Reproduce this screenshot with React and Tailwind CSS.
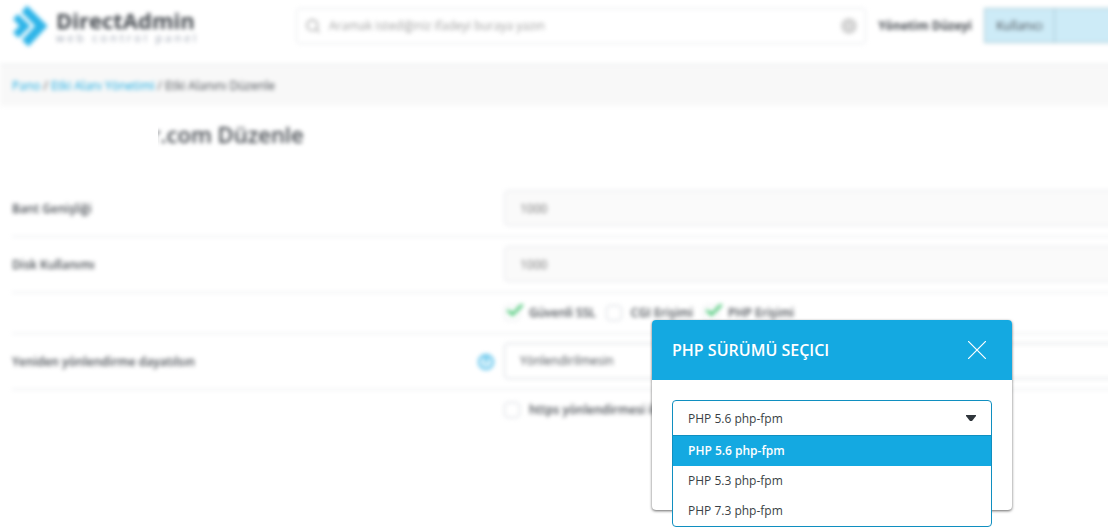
import { useState } from "react";
import { Search } from "lucide-react";

const phpVersions = ["PHP 5.6 php-fpm", "PHP 5.3 php-fpm", "PHP 7.3 php-fpm"];

const limits = [
    { id: "bandwidth", label: "Bant Genişliği", value: "1000" },
    { id: "disk", label: "Disk Kullanımı", value: "1000" },
];

function Logo() {
    return (
        <a href="#" className="flex w-[284px] shrink-0 items-center gap-2">
            <svg viewBox="0 0 36 42" className="h-[42px] w-9" aria-hidden="true">
                <path d="M15 .5 35.500 21 16.500 41.500 10 35 23 21 9.500 7z" fill="#2db4e8" />
                <path d="M6 9 18.500 21 6.500 33 1 27.500 7.500 21 1 14z" fill="#2db4e8" />
            </svg>
            <div>
                <div className="text-[22px] leading-6 font-bold text-[#454a50]">DirectAdmin</div>
                <div className="text-[11px] leading-3 tracking-[3px] text-gray-400">web control panel</div>
            </div>
        </a>
    );
}

function Header() {
    return (
        <header className="flex h-16 items-start">
            <div className="flex h-[52px] items-center pl-3">
                <Logo />
            </div>
            <div className="mt-2 flex h-9 flex-1 items-center gap-2 rounded border border-gray-200 px-2">
                <Search className="size-4 text-neutral-400" />
                <input
                    type="text"
                    aria-label="Arama"
                    placeholder="Aramak istediğiniz ifadeyi buraya yazın"
                    className="flex-1 text-xs outline-none placeholder:text-neutral-400"
                />
                <button type="button" aria-label="Temizle" className="flex size-4 items-center justify-center rounded-full bg-neutral-300">
                    <span className="block size-1 rounded-full bg-neutral-200" />
                </button>
            </div>
            <div className="ml-3 flex h-[52px] items-center text-xs font-bold text-[#454a50]">Yönetim Düzeyi</div>
            <div className="mt-2 ml-3 flex h-[35px] w-40 border border-[#a3c6d2] bg-[#cdebf7] text-xs text-[#454a50]">
                <button type="button" className="w-[70px] border-r border-[#a3c6d2]">Kullanıcı</button>
            </div>
        </header>
    );
}

function Breadcrumb() {
    return (
        <nav className="flex h-[42px] items-center gap-[3px] border-t border-gray-200 bg-[#f8f8f8] px-3 text-xs text-[#454a50]">
            <a href="#" className="text-[#14a9e1]">Pano</a>
            <span>/</span>
            <a href="#" className="text-[#14a9e1]">Etki Alanı Yönetimi</a>
            <span>/</span>
            <span>Etki Alanını Düzenle</span>
        </nav>
    );
}

function CheckOption({ label, defaultChecked }) {
    return (
        <label className="flex items-center gap-[9px] text-xs font-semibold">
            <span className="relative flex">
                <input
                    type="checkbox"
                    defaultChecked={defaultChecked}
                    className="peer size-4 appearance-none rounded-sm border border-gray-300 checked:border-gray-200"
                />
                <svg viewBox="0 0 18 14" className="absolute -top-0.5 left-0.5 hidden h-[14px] w-[18px] peer-checked:block">
                    <path d="M1.500 7 6.500 11.500 16.500 1.500" fill="none" stroke="#4cc878" strokeWidth="3" />
                </svg>
            </span>
            {label}
        </label>
    );
}

function Row({ id, label, help, border = true, children }) {
    return (
        <div className={border ? "flex items-center border-b border-gray-200" : "flex items-center"}>
            <div className="flex w-[492px] shrink-0 items-center justify-between pr-[10px]">
                <label htmlFor={id} className="text-xs font-semibold">{label}</label>
                {help && (
                    <button type="button" aria-label="Yardım" className="flex size-4 items-center justify-center rounded-full border-2 border-[#4dbdea] bg-[#e3f5fc] text-[10px] font-bold text-[#14a9e1]">
                        ?
                    </button>
                )}
            </div>
            <div className="flex flex-1 items-center">{children}</div>
        </div>
    );
}

function DomainForm() {
    return (
        <main className="pl-3 text-[#454a50]">
            <h1 className="flex h-[75px] items-start pt-3 pl-[139px] text-[22px] leading-8 font-semibold">r.com Düzenle</h1>
            <form>
                {limits.map((item) => (
                    <Row key={item.id} id={item.id} label={item.label}>
                        <input
                            id={item.id}
                            type="text"
                            readOnly
                            defaultValue={item.value}
                            className="mt-[9px] mb-[10px] h-9 w-full rounded border border-gray-200 bg-[#fafafa] px-[15px] text-xs text-neutral-500"
                        />
                    </Row>
                ))}
                <Row>
                    <div className="flex h-10 items-center gap-[10px]">
                        <CheckOption label="Güvenli SSL" defaultChecked />
                        <CheckOption label="CGI Erişimi" />
                        <CheckOption label="PHP Erişimi" defaultChecked />
                    </div>
                </Row>
                <Row id="redirect" label="Yeniden yönlendirme dayatılsın" help>
                    <select id="redirect" className="mt-[9px] mb-[10px] h-9 w-full appearance-none rounded border border-gray-300 px-[15px] text-xs">
                        <option>Yönlendirilmesin</option>
                    </select>
                </Row>
                <Row border={false}>
                    <div className="flex h-10 items-center">
                        <CheckOption label="https yönlendirmesi ile SSL zorla" />
                    </div>
                </Row>
            </form>
        </main>
    );
}

function PhpSelector() {
    const [version, setVersion] = useState(phpVersions[0]);

    return (
        <section role="dialog" aria-labelledby="php-title" className="absolute top-80 right-24 h-[190px] w-[360px] rounded-sm bg-white shadow-[0_1px_3px_rgba(0,0,0,0.6)]">
            <div className="flex h-[60px] items-center justify-between rounded-t-sm bg-[#14a9e1] pr-[26px] pl-5 text-white">
                <h2 id="php-title" className="text-base font-semibold">PHP SÜRÜMÜ SEÇICI</h2>
                <button type="button" aria-label="Kapat">
                    <svg viewBox="0 0 18 18" className="size-[18px]" fill="none" stroke="currentColor" strokeWidth="1.2">
                        <path d="M0 0 18 18M18 0 0 18" />
                    </svg>
                </button>
            </div>
            <div className="p-5">
                <div className="rounded border border-[#108fc0] bg-white text-xs text-[#3a3f45]">
                    <div className="relative">
                        <select
                            aria-label="PHP sürümü"
                            value={version}
                            onChange={(e) => setVersion(e.target.value)}
                            className="block h-[34px] w-full appearance-none px-[15px] pt-0.5 outline-none"
                        >
                            {phpVersions.map((item) => (
                                <option key={item}>{item}</option>
                            ))}
                        </select>
                        <svg viewBox="0 0 10 6" className="pointer-events-none absolute top-[14px] right-[15px] h-[6px] w-[10px]" fill="#30363c">
                            <path d="M0 0h10v1L6 6H4L0 1z" />
                        </svg>
                    </div>
                    <ul role="listbox" aria-label="PHP sürümleri" className="border-t border-[#108fc0]">
                        {phpVersions.map((item) => (
                            <li key={item}>
                                <button
                                    type="button"
                                    role="option"
                                    aria-selected={item === version}
                                    onClick={() => setVersion(item)}
                                    className="block h-[30px] w-full px-[15px] text-left aria-selected:bg-[#14a9e1] aria-selected:font-semibold aria-selected:text-white"
                                >
                                    {item}
                                </button>
                            </li>
                        ))}
                    </ul>
                </div>
            </div>
        </section>
    );
}

export default function App() {
    return (
        <div className="relative min-h-screen overflow-hidden bg-white font-['Open_Sans','Noto_Sans',sans-serif]">
            {/* page behind the dialog */}
            <div className="-mr-9 blur-[2px]">
                <Header />
                <Breadcrumb />
                <DomainForm />
            </div>
            {/* hides the domain name */}
            <div className="absolute top-28 left-[10px] h-11 w-[148px] bg-white" />
            <PhpSelector />
        </div>
    );
}
